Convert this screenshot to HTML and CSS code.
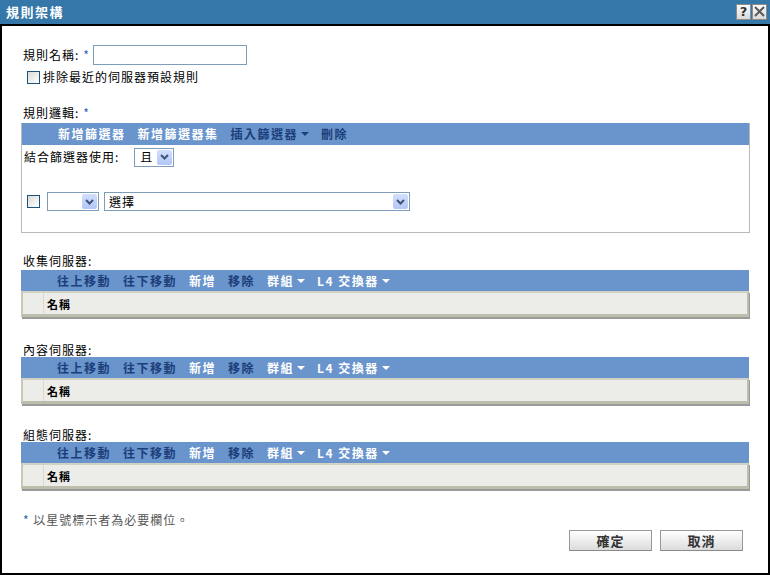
FILE: index.html
```html
<!DOCTYPE html>
<html lang="zh-Hant">
<head>
<meta charset="utf-8">
<title>規則架構</title>
<link rel="stylesheet" href="styles.css">
</head>
<body>
<div class="dialog">
  <div class="titlebar">
    <span class="title">規則架構</span>
    <div class="title-btns">
      <span class="tbtn help">?</span>
      <span class="tbtn close"><svg width="11" height="11" viewBox="0 0 11 11"><path d="M1 1 L10 10 M10 1 L1 10" stroke="#5a5a5a" stroke-width="2"/></svg></span>
    </div>
  </div>
  <div class="body">
    <div class="name-row">
      <span class="lbl">規則名稱:</span><span class="req">*</span>
      <span class="textbox"></span>
    </div>
    <div class="check-row">
      <span class="checkbox"></span><span class="lbl">排除最近的伺服器預設規則</span>
    </div>

    <div class="sec-label logic-label"><span class="lbl">規則邏輯:</span><span class="req">*</span></div>
    <div class="panel">
      <div class="toolbar">
        <span class="ti on">新增篩選器</span>
        <span class="ti on">新增篩選器集</span>
        <span class="ti">插入篩選器<i class="caret"></i></span>
        <span class="ti">刪除</span>
      </div>
      <div class="combine-row">
        <span class="lbl">結合篩選器使用:</span>
        <span class="select sel-and"><span class="sel-text">且</span><span class="arrow"><svg width="9" height="6" viewBox="0 0 9 6"><path d="M1 1 L4.5 4.5 L8 1" fill="none" stroke="#3f5478" stroke-width="2"/></svg></span></span>
      </div>
      <div class="filter-row">
        <span class="checkbox"></span>
        <span class="select sel-op"><span class="sel-text"></span><span class="arrow"><svg width="9" height="6" viewBox="0 0 9 6"><path d="M1 1 L4.5 4.5 L8 1" fill="none" stroke="#3f5478" stroke-width="2"/></svg></span></span>
        <span class="select sel-choose"><span class="sel-text">選擇</span><span class="arrow"><svg width="9" height="6" viewBox="0 0 9 6"><path d="M1 1 L4.5 4.5 L8 1" fill="none" stroke="#3f5478" stroke-width="2"/></svg></span></span>
      </div>
    </div>

    <div class="sec-label s1"><span class="lbl">收集伺服器:</span></div>
    <div class="grid">
      <div class="toolbar">
        <span class="ti">往上移動</span>
        <span class="ti">往下移動</span>
        <span class="ti on">新增</span>
        <span class="ti">移除</span>
        <span class="ti on">群組<i class="caret"></i></span>
        <span class="ti on">L4 交換器<i class="caret"></i></span>
      </div>
      <div class="grid-head"><span class="gcell first"></span><span class="gcell">名稱</span></div>
    </div>

    <div class="sec-label s2"><span class="lbl">內容伺服器:</span></div>
    <div class="grid">
      <div class="toolbar">
        <span class="ti">往上移動</span>
        <span class="ti">往下移動</span>
        <span class="ti on">新增</span>
        <span class="ti">移除</span>
        <span class="ti on">群組<i class="caret"></i></span>
        <span class="ti on">L4 交換器<i class="caret"></i></span>
      </div>
      <div class="grid-head"><span class="gcell first"></span><span class="gcell">名稱</span></div>
    </div>

    <div class="sec-label s3"><span class="lbl">組態伺服器:</span></div>
    <div class="grid">
      <div class="toolbar">
        <span class="ti">往上移動</span>
        <span class="ti">往下移動</span>
        <span class="ti on">新增</span>
        <span class="ti">移除</span>
        <span class="ti on">群組<i class="caret"></i></span>
        <span class="ti on">L4 交換器<i class="caret"></i></span>
      </div>
      <div class="grid-head"><span class="gcell first"></span><span class="gcell">名稱</span></div>
    </div>

    <div class="note"><span class="req">*</span> 以星號標示者為必要欄位。</div>
    <div class="actions">
      <span class="btn">確定</span>
      <span class="btn">取消</span>
    </div>
  </div>
</div>
</body>
</html>
```

FILE: styles.css
```css
* { box-sizing: border-box; }
html, body { margin: 0; padding: 0; background: #fff; }
body {
  font-family: "Noto Sans CJK TC", "Noto Sans", "Liberation Sans", sans-serif;
  font-size: 12px;
  color: #000;
}
.dialog {
  width: 770px;
  height: 575px;
  display: flex;
  flex-direction: column;
  overflow: hidden;
}
.titlebar {
  height: 26px;
  flex: none;
  background: #3677aa;
  border-bottom: 2px solid #000;
  display: flex;
  align-items: center;
  justify-content: space-between;
  padding: 0 3px 0 6px;
}
.title {
  color: #fff;
  font-weight: bold;
  font-size: 13px;
  letter-spacing: 1.5px;
  line-height: 16px;
  margin-top: -1px;
}
.title-btns { display: flex; gap: 1px; margin-top: -1px; }
.tbtn {
  width: 15px;
  height: 16px;
  border: 1px solid #8c8c8c;
  background: linear-gradient(#fbfbfb, #d9d9d9);
  display: flex;
  align-items: center;
  justify-content: center;
}
.tbtn.help {
  font-family: "DejaVu Sans", sans-serif;
  font-weight: bold;
  font-size: 13px;
  color: #333;
  line-height: 14px;
}
.body {
  flex: 1;
  border: 2px solid #000;
  border-top: none;
  padding: 0 18px 0 19px;
  display: flex;
  flex-direction: column;
}
.lbl { letter-spacing: 1px; line-height: 14px; }
.req { color: #2b63b8; margin-left: 4px; line-height: 14px; }
.name-row {
  margin-top: 19px;
  height: 20px;
  display: flex;
  align-items: center;
  padding-left: 2px;
}
.textbox {
  display: block;
  width: 154px;
  height: 20px;
  border: 1px solid #7f9db9;
  margin-left: 4px;
  background: #fff;
}
.check-row {
  margin-top: 5px;
  height: 14px;
  display: flex;
  align-items: center;
  padding-left: 6px;
}
.checkbox {
  display: block;
  width: 13px;
  height: 13px;
  border: 1px solid #1c5180;
  background: linear-gradient(135deg, #dcdcd6, #fff);
  margin-right: 3px;
  flex: none;
}
.sec-label {
  height: 14px;
  display: flex;
  align-items: center;
  padding-left: 2px;
  margin-bottom: 2px;
}
.logic-label { margin-top: 22px; margin-bottom: 3px; }
.s1 { margin-top: 21px; }
.s2 { margin-top: 26px; margin-bottom: 0; }
.s3 { margin-top: 24px; margin-bottom: 0; }
.panel {
  width: 729px;
  height: 110px;
  border: 1px solid #b9b9b9;
  border-top: none;
}
.toolbar {
  height: 22px;
  background: #6994cc;
  display: flex;
  align-items: center;
  gap: 12px;
  padding-left: 36px;
}
.ti {
  font-weight: bold;
  color: #1c3f7a;
  letter-spacing: 1.5px;
  line-height: 14px;
  display: flex;
  align-items: center;
  white-space: nowrap;
}
.ti.on { color: #fff; }
.caret {
  display: inline-block;
  width: 0;
  height: 0;
  border-left: 4px solid transparent;
  border-right: 4px solid transparent;
  border-top: 4px solid currentColor;
  margin-left: 3px;
}
.combine-row {
  display: flex;
  align-items: center;
  height: 20px;
  margin-top: 2px;
  padding-left: 2px;
}
.select {
  display: flex;
  align-items: center;
  justify-content: space-between;
  height: 19px;
  border: 1px solid #7f9db9;
  background: #fff;
  padding: 1px 1px 1px 4px;
}
.sel-and { width: 40px; margin-left: 15px; padding-left: 5px; }
.sel-op { width: 52px; margin-left: 4px; }
.sel-choose { width: 306px; margin-left: 5px; }
.sel-text { line-height: 14px; letter-spacing: 1px; }
.arrow {
  width: 15px;
  height: 15px;
  border-radius: 2px;
  background: linear-gradient(#d2defc, #b2c7f6);
  display: flex;
  align-items: center;
  justify-content: center;
}
.filter-row {
  display: flex;
  align-items: center;
  height: 19px;
  margin-top: 25px;
  padding-left: 5px;
}
.grid { width: 728px; }
.grid .toolbar { height: 21px; }
.grid-head {
  height: 26px;
  background: #ecece8;
  border-top: 2px solid #d2d2c4;
  border-left: 2px solid #c8c8b8;
  border-right: 2px solid #bdbdab;
  border-bottom: 3px solid #bdbdab;
  box-shadow: 1px 2px 0 #9a9a9a;
  display: flex;
  align-items: center;
}
.gcell {
  font-weight: bold;
  font-size: 11px;
  letter-spacing: 1px;
  line-height: 14px;
  padding-left: 3px;
}
.gcell.first {
  width: 21px;
  align-self: stretch;
  border-right: 1px solid #d9d9cc;
  padding: 0;
}
.note {
  margin-top: 24px;
  color: #555;
  line-height: 14px;
  letter-spacing: 1px;
  padding-left: 2px;
}
.note .req { margin-left: 0; color: #2b63b8; }
.actions {
  display: flex;
  justify-content: flex-end;
  gap: 8px;
  margin-top: 3px;
  padding-right: 7px;
}
.btn {
  width: 83px;
  height: 21px;
  border: 1px solid #999;
  border-bottom-color: #8a8a8a;
  background: linear-gradient(#ffffff, #dcdcdc);
  display: flex;
  align-items: center;
  justify-content: center;
  font-weight: bold;
  font-size: 13px;
  color: #333;
  letter-spacing: 1px;
}
```
